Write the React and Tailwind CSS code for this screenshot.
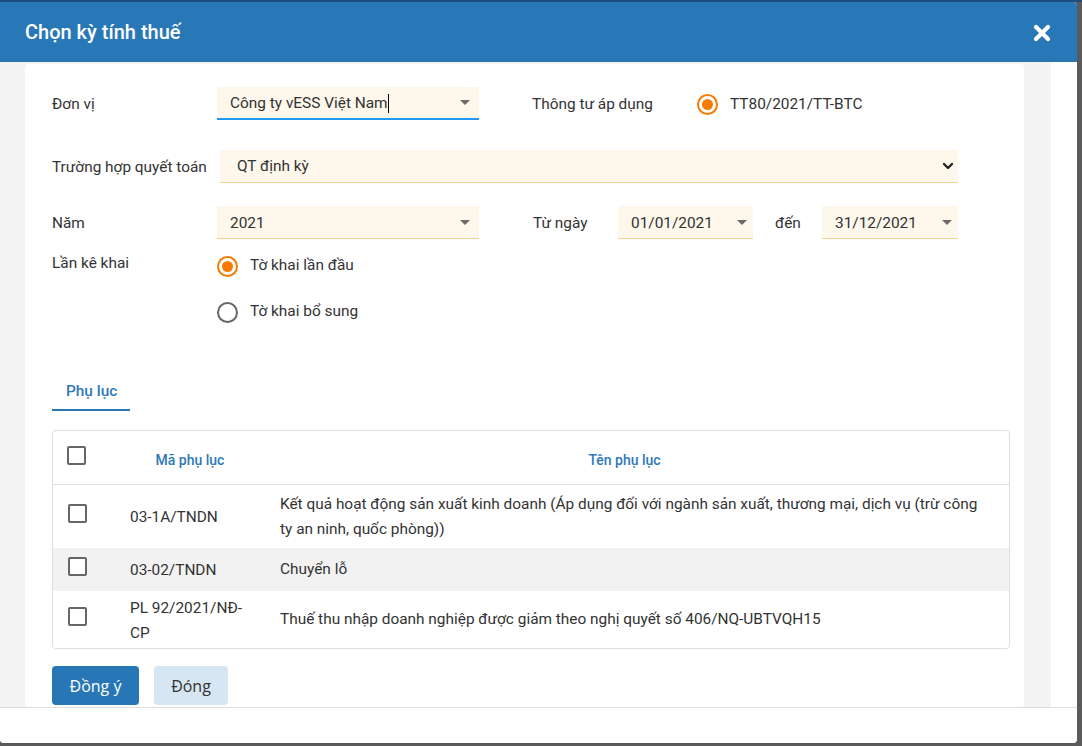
import React from "react";

function Caret() {
  return (
    <svg width="10" height="5" viewBox="0 0 10 5">
      <path d="M0 0h10L5 5z" fill="#6b6b6b" />
    </svg>
  );
}

function Radio({ checked }) {
  return checked ? (
    <span className="w-[21px] h-[21px] shrink-0 rounded-full border-2 border-[#f57c00] flex items-center justify-center">
      <span className="w-[11px] h-[11px] rounded-full bg-[#f57c00]" />
    </span>
  ) : (
    <span className="w-[21px] h-[21px] shrink-0 rounded-full border-2 border-[#666666]" />
  );
}

function Checkbox() {
  return <span className="block w-[19px] h-[19px] border-2 border-[#666666] rounded-[2px] bg-white" />;
}

const rows = [
  {
    code: "03-1A/TNDN",
    name: "Kết quả hoạt động sản xuất kinh doanh (Áp dụng đối với ngành sản xuất, thương mại, dịch vụ (trừ công ty an ninh, quốc phòng))",
    h: "h-[63px]",
    bg: "bg-white",
  },
  { code: "03-02/TNDN", name: "Chuyển lỗ", h: "h-[43px]", bg: "bg-[#f2f2f2]" },
  {
    code: "PL 92/2021/NĐ-CP",
    name: "Thuế thu nhập doanh nghiệp được giảm theo nghị quyết số 406/NQ-UBTVQH15",
    h: "h-[57px]",
    bg: "bg-white",
  },
];

export default function App() {
  return (
    <div className="w-[1082px] h-[746px] bg-[#5a5a5a] overflow-hidden flex flex-col font-['Roboto',sans-serif] text-[15.4px] text-[#333333]">
      <div className="h-[2px] w-full bg-[#1d4e7d] shrink-0" />
      <div className="flex">
        <div className="w-[1077px] h-[741px] bg-white rounded-tr-[4px] rounded-b-[4px] overflow-hidden flex flex-col">
          {/* Header */}
          <div className="h-[60px] shrink-0 bg-[#2878b8] flex items-center justify-between pl-[25px] pr-[26px]">
            <div className="text-white text-[20px] font-medium leading-[24px]">Chọn kỳ tính thuế</div>
            <svg width="18" height="18" viewBox="0 0 18 18" className="mt-[2px]">
              <path d="M3 3L15 15M15 3L3 15" stroke="white" strokeWidth="4.2" strokeLinecap="round" />
            </svg>
          </div>

          {/* Body */}
          <div className="h-[645px] shrink-0 flex bg-[#f4f4f4]">
            <div className="w-[25px] shrink-0" />
            <div className="w-[999px] shrink-0 mt-[2px] bg-white rounded-[4px] overflow-hidden pl-[27px] pr-[14px]">
              {/* Row 1 */}
              <div className="flex items-center mt-[23px] h-[33px]">
                <div className="w-[165px] shrink-0 pt-[3px]">Đơn vị</div>
                <div className="w-[262px] h-[33px] shrink-0 bg-[#fef7ec] border-b-2 border-[#2196f3] flex items-center justify-between pl-[13px] pr-[9px]">
                  <div className="flex items-center pt-[3px]">
                    <span>Công ty vESS Việt Nam</span>
                    <span className="w-px h-[19px] bg-black" />
                  </div>
                  <Caret />
                </div>
                <div className="ml-[53px] w-[165px] shrink-0 pt-[3px]">Thông tư áp dụng</div>
                <div className="flex items-center gap-[12px] mt-[3px]">
                  <Radio checked />
                  <span>TT80/2021/TT-BTC</span>
                </div>
              </div>

              {/* Row 2 */}
              <div className="flex items-center mt-[30px] h-[33px]">
                <div className="w-[168px] shrink-0 pt-[2px]">Trường hợp quyết toán</div>
                <div className="w-[738px] h-[33px] shrink-0 bg-[#fef7ec] border-b border-[#f8cf8f] flex items-center justify-between pl-[17px] pr-[4px]">
                  <span className="pt-[2px]">QT định kỳ</span>
                  <svg width="12" height="8" viewBox="0 0 12 8">
                    <path d="M2 2l4 4 4-4" stroke="#222" strokeWidth="2.4" fill="none" strokeLinecap="round" strokeLinejoin="round" />
                  </svg>
                </div>
              </div>

              {/* Row 3 */}
              <div className="flex items-center mt-[23px] h-[33px]">
                <div className="w-[165px] shrink-0 pt-[3px]">Năm</div>
                <div className="w-[262px] h-[33px] shrink-0 bg-[#fef7ec] border-b border-[#f8cf8f] flex items-center justify-between pl-[13px] pr-[9px]">
                  <span className="pt-[3px]">2021</span>
                  <Caret />
                </div>
                <div className="ml-[54px] w-[85px] shrink-0 pt-[3px]">Từ ngày</div>
                <div className="w-[135px] h-[33px] shrink-0 bg-[#fef7ec] border-b border-[#f8cf8f] flex items-center justify-between pl-[13px] pr-[6px]">
                  <span className="pt-[3px]">01/01/2021</span>
                  <Caret />
                </div>
                <div className="ml-[22px] w-[47px] shrink-0 pt-[3px]">đến</div>
                <div className="w-[136px] h-[33px] shrink-0 bg-[#fef7ec] border-b border-[#f8cf8f] flex items-center justify-between pl-[13px] pr-[6px]">
                  <span className="pt-[3px]">31/12/2021</span>
                  <Caret />
                </div>
              </div>

              {/* Row 4 */}
              <div className="flex mt-[13px]">
                <div className="w-[165px] shrink-0 leading-[22px]">Lần kê khai</div>
                <div className="flex flex-col gap-[18px]">
                  <div className="flex items-center gap-[12px] h-[28px]">
                    <Radio checked />
                    <span>Tờ khai lần đầu</span>
                  </div>
                  <div className="flex items-center gap-[12px] h-[28px]">
                    <Radio />
                    <span>Tờ khai bổ sung</span>
                  </div>
                </div>
              </div>

              {/* Tab */}
              <div className="mt-[45px] w-[78px] h-[40px] border-b-2 border-[#2878b8] pt-[10px] pl-[14px] leading-[20px] text-[#2f79b9] font-medium">
                Phụ lục
              </div>

              {/* Table */}
              <div className="mt-[19px] w-[958px] border border-[#dddddd] rounded-[4px] overflow-hidden">
                <div className="flex items-center h-[54px] border-b border-[#e0e0e0] text-[14px] font-medium text-[#2f79b9]">
                  <div className="w-[62px] shrink-0 pl-[14px] mb-[5px]">
                    <Checkbox />
                  </div>
                  <div className="w-[150px] shrink-0 text-center pt-[6px]">Mã phụ lục</div>
                  <div className="flex-1 text-center pl-[15px] pr-[40px] pt-[6px]">Tên phụ lục</div>
                </div>
                {rows.map((r) => (
                  <div key={r.code} className={`flex items-center ${r.h} ${r.bg} leading-[25px]`}>
                    <div className="w-[62px] shrink-0 pl-[15px] mb-[6px]">
                      <Checkbox />
                    </div>
                    <div className="w-[150px] shrink-0 px-[15px] pt-[2px]">{r.code}</div>
                    <div className="flex-1 pl-[15px] pr-[26px]">{r.name}</div>
                  </div>
                ))}
              </div>

              {/* Buttons */}
              <div className="flex gap-[15px] mt-[17px] font-['Open_Sans',sans-serif] text-[16px]">
                <button className="h-[39px] w-[87px] rounded-[4px] bg-[#2776b5] text-white">Đồng ý</button>
                <button className="h-[39px] w-[74px] rounded-[4px] bg-[#d6e6f3] text-[#333]">Đóng</button>
              </div>
            </div>
            <div className="w-[27px] shrink-0" />
            <div className="flex-1 bg-white" />
          </div>

          {/* Footer */}
          <div className="flex-1 border-t border-[#dedede] bg-white" />
        </div>
      </div>
    </div>
  );
}
